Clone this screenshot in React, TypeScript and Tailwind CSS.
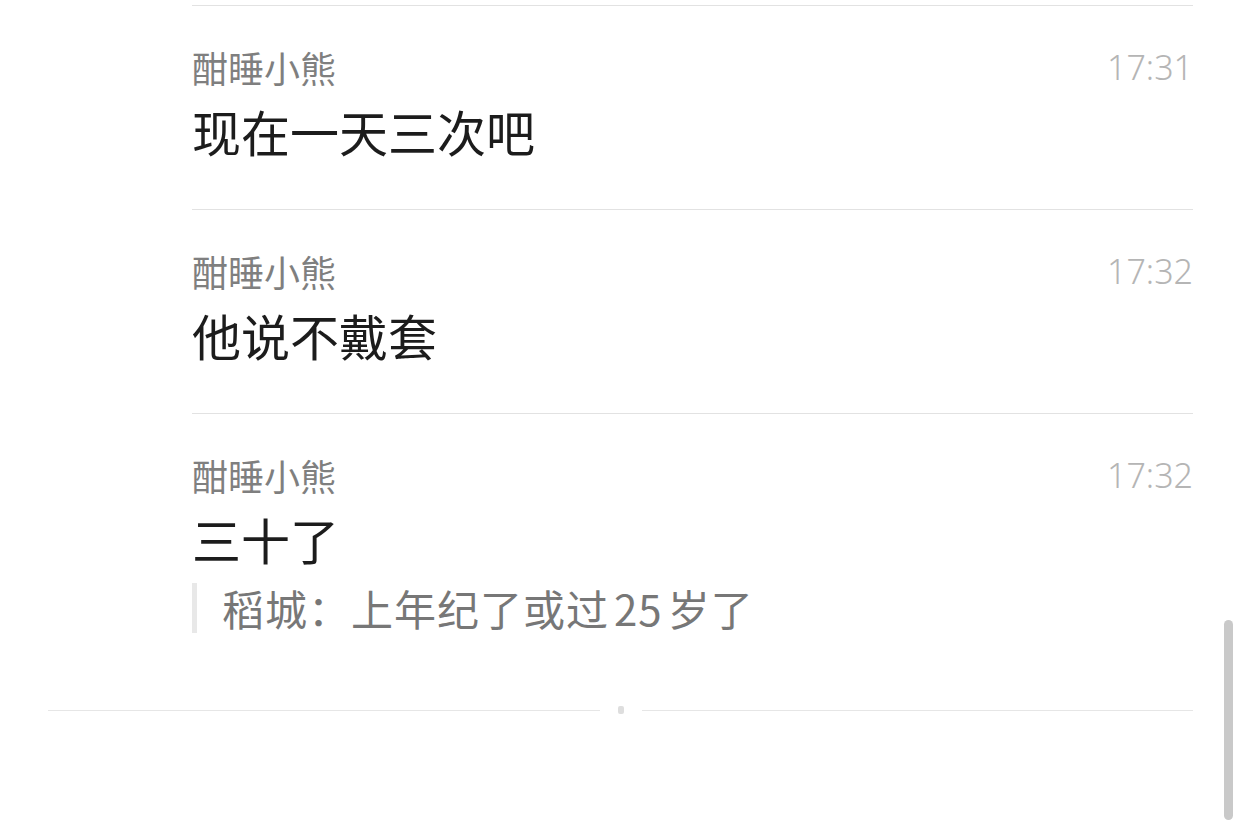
import React from "react"

interface Msg {
  name: string
  time: string
  text: string
  quote?: { who: string; before: string; num: string; after: string }
}

const messages: Msg[] = [
  { name: "酣睡小熊", time: "17:31", text: "现在一天三次吧" },
  { name: "酣睡小熊", time: "17:32", text: "他说不戴套" },
  {
    name: "酣睡小熊",
    time: "17:32",
    text: "三十了",
    quote: { who: "稻城：", before: "上年纪了或过", num: "25", after: "岁了" },
  },
]

const cjk = { fontFamily: '"Noto Sans CJK SC", "Noto Sans", sans-serif' }

function MessageRow({ msg, last }: { msg: Msg; last: boolean }) {
  return (
    <div className={`border-t border-[#e2e2e2] pt-[41px] ${last ? "pb-0" : "pb-[50px]"}`}>
      <div className="flex items-center justify-between h-[40px]">
        <span className="text-[36px] leading-[40px] text-[#7f7f7f]">{msg.name}</span>
        <span
          className="text-[34px] leading-[40px] text-[#b5b5b5] font-light"
          style={{ fontFamily: '"Noto Sans", sans-serif' }}
        >
          {msg.time}
        </span>
      </div>
      <div className="mt-[16px] text-[49px] leading-[56px] text-[#1c1c1c]">{msg.text}</div>
      {msg.quote && (
        <div className="mt-[16px] flex items-stretch">
          <div className="w-[5px] bg-[#e8e8e8]" />
          <div className="pl-[25px] text-[42px] leading-[50px] tracking-[1px] text-[#777777]">
            {msg.quote.who}
            {msg.quote.before}
            <span className="mx-[5px]">{msg.quote.num}</span>
            {msg.quote.after}
          </div>
        </div>
      )}
    </div>
  )
}

export default function App() {
  return (
    <div className="relative w-[1242px] h-[828px] bg-white overflow-hidden" style={cjk}>
      <div className="pt-[5px] pl-[192px] pr-[49px]">
        {messages.map((m, i) => (
          <MessageRow key={i} msg={m} last={i === messages.length - 1} />
        ))}
      </div>

      {/* load-more divider */}
      <div className="mt-[73px] ml-[48px] mr-[49px] flex items-center">
        <div className="flex-1 h-px bg-[#e6e6e6]" />
        <div className="mx-[18px] w-[6px] h-[8px] rounded-[2px] bg-[#dedede]" />
        <div className="w-[551px] h-px bg-[#e6e6e6]" />
      </div>

      {/* scrollbar */}
      <div className="absolute left-[1224px] top-[620px] w-[9px] h-[200px] rounded-full bg-[#c9c9c9]" />
    </div>
  )
}
